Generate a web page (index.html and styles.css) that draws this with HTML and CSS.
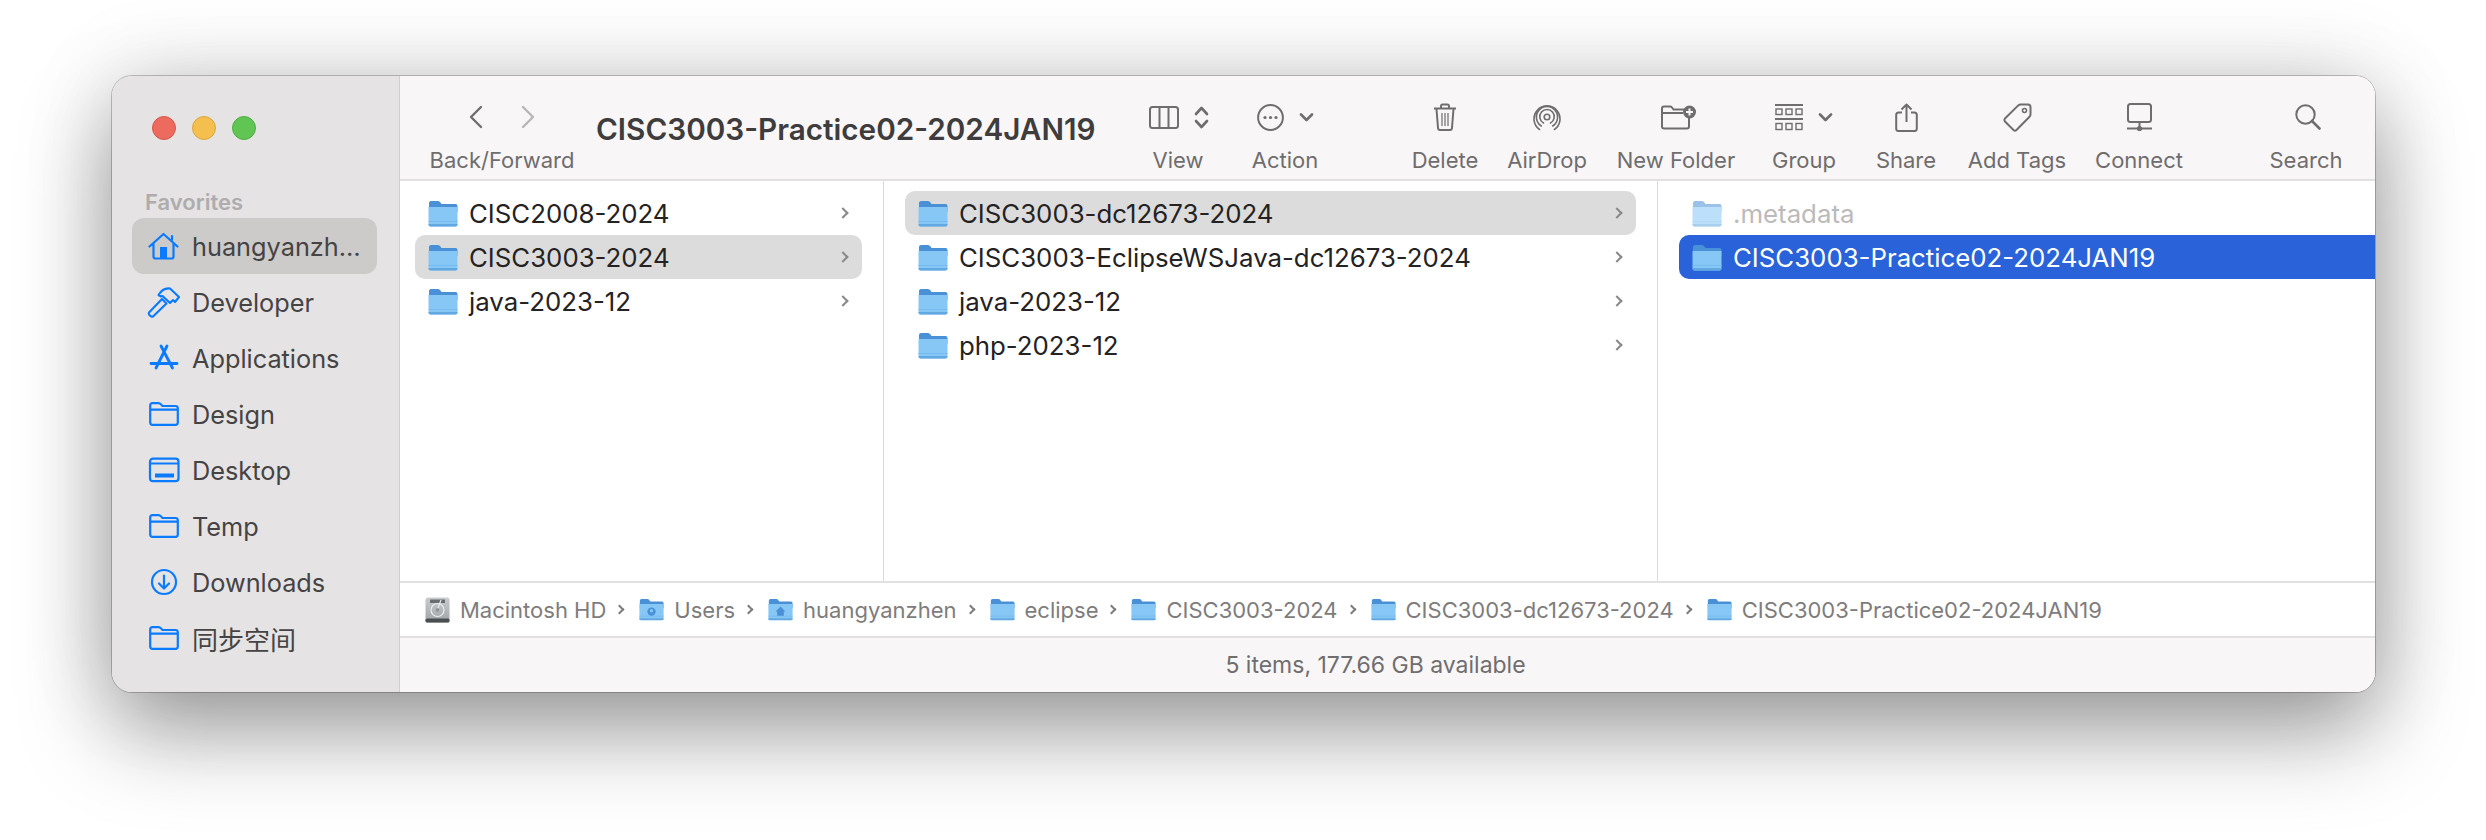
FILE: index.html
```html
<!DOCTYPE html>
<html lang="en">
<head>
    <meta charset="UTF-8">
    <meta name="viewport" content="width=device-width, initial-scale=1.0">
    <title>CISC3003-Practice02-2024JAN19</title>
    <link rel="stylesheet" href="styles.css">
</head>
<body>

    <svg class="defs" aria-hidden="true">
        <symbol id="folder" viewBox="0 0 30 27">
            <path d="M1 5V3Q1 1 3 1H10Q11.5 1 12.5 2.5L13.5 4H27.5Q29.5 4 29.5 6V12H1Z" fill="#4a90d6"/>
            <path d="M.5 7H29.5V24.5Q29.5 26.5 27.5 26.5H2.5Q.5 26.5 .5 24.5Z" fill="#86c7f6"/>
            <path d="M.5 21H29.5V21.8H.5Z" fill="#72b8ee"/>
            <path d="M.5 24H29.5V24.5Q29.5 26.5 27.5 26.5H2.5Q.5 26.5 .5 24.5Z" fill="#63a8e0"/>
        </symbol>
        <symbol id="side-folder" viewBox="0 0 32 28">
            <path d="M2.2 7V5.5Q2.2 3.2 4.5 3.2H10.5Q12 3.2 13 4.4L14.4 6H27.5Q29.8 6 29.8 8.3V22.5Q29.8 24.8 27.5 24.8H4.5Q2.2 24.8 2.2 22.5V7ZM2.2 9.6H29.8" fill="none" stroke="#0a7aff" stroke-width="2.2"/>
        </symbol>
        <symbol id="chev-down" viewBox="0 0 15 9">
            <path d="M2 1.5L7.5 7L13 1.5" fill="none" stroke="#6f6d6d" stroke-width="2.6" stroke-linecap="round" stroke-linejoin="round"/>
        </symbol>
    </svg>

    <div class="window">
        <aside class="sidebar">
            <div class="lights">
                <span class="light red"></span>
                <span class="light yellow"></span>
                <span class="light green"></span>
            </div>
            <div class="side-title">Favorites</div>
            <ul class="side-list">
                <li class="side-item active">
                    <svg class="side-icon" viewBox="0 0 32 28"><path d="M1.5 14.5L15.5 2L29.5 14.5M5.5 11V24.5Q5.5 26.5 7.5 26.5H23.5Q25.5 26.5 25.5 24.5V11M24 4V8" fill="none" stroke="#0a7aff" stroke-width="2.2" stroke-linecap="round" stroke-linejoin="round"/><rect x="12" y="15" width="7" height="11" fill="#0a7aff"/></svg>
                    <span>huangyanzh…</span>
                </li>
                <li class="side-item">
                    <svg class="side-icon" viewBox="0 0 32 28"><path d="M1 24.5L14 11L18.5 15.5L5 28.5Q3.5 29 2.5 28L1 26.5Q.5 25.5 1 24.5ZM10.5 7Q15 -.5 22 .5L31 9L27 14L25 12L22 15L14.5 8L13 8.5Z" fill="none" stroke="#0a7aff" stroke-width="2.1" stroke-linejoin="round"/></svg>
                    <span>Developer</span>
                </li>
                <li class="side-item">
                    <svg class="side-icon" viewBox="0 0 32 28"><path d="M13 2L24.5 24M19 2L8 24M3 19.5H29" fill="none" stroke="#0a7aff" stroke-width="2.8" stroke-linecap="round"/></svg>
                    <span>Applications</span>
                </li>
                <li class="side-item">
                    <svg class="side-icon"><use href="#side-folder"/></svg>
                    <span>Design</span>
                </li>
                <li class="side-item">
                    <svg class="side-icon" viewBox="0 0 32 25"><rect x="2" y="1.2" width="28.5" height="22.5" rx="3" fill="none" stroke="#0a7aff" stroke-width="2.2"/><path d="M2 6H30.5" stroke="#0a7aff" stroke-width="2"/><rect x="7" y="16" width="19" height="4" fill="#0a7aff"/></svg>
                    <span>Desktop</span>
                </li>
                <li class="side-item">
                    <svg class="side-icon"><use href="#side-folder"/></svg>
                    <span>Temp</span>
                </li>
                <li class="side-item">
                    <svg class="side-icon" viewBox="0 0 32 28"><circle cx="16" cy="14" r="12" fill="none" stroke="#0a7aff" stroke-width="2.2"/><path d="M16 7.5V20M11 15.5L16 20.5L21 15.5" fill="none" stroke="#0a7aff" stroke-width="2.2" stroke-linecap="round" stroke-linejoin="round"/></svg>
                    <span>Downloads</span>
                </li>
                <li class="side-item">
                    <svg class="side-icon"><use href="#side-folder"/></svg>
                    <span class="cjk">同步空间</span>
                </li>
            </ul>
        </aside>

        <main class="main">
            <header class="toolbar">
                <div class="tool nav">
                    <div class="tool-icons nav-icons">
                        <svg class="ic" width="14" height="24" viewBox="0 0 14 24"><path d="M12 2L2 12L12 22" fill="none" stroke="#6f6d6d" stroke-width="2.4" stroke-linecap="round" stroke-linejoin="round"/></svg>
                        <svg class="ic" width="14" height="24" viewBox="0 0 14 24"><path d="M2 2L12 12L2 22" fill="none" stroke="#b8b6b6" stroke-width="2.4" stroke-linecap="round" stroke-linejoin="round"/></svg>
                    </div>
                    <div class="tool-label">Back/Forward</div>
                </div>
                <div class="win-title">CISC3003-Practice02-2024JAN19</div>

                <div class="tool t-view">
                    <div class="tool-icons">
                        <svg width="30" height="23" viewBox="0 0 30 23"><rect x="1" y="1" width="28" height="21" rx="2.5" fill="none" stroke="#6f6d6d" stroke-width="2"/><path d="M10.5 1V22M19.5 1V22" stroke="#6f6d6d" stroke-width="2"/></svg>
                        <svg width="15" height="23" viewBox="0 0 15 23"><path d="M2 8L7.5 2L13 8M2 15L7.5 21L13 15" fill="none" stroke="#6f6d6d" stroke-width="2.6" stroke-linecap="round" stroke-linejoin="round"/></svg>
                    </div>
                    <div class="tool-label">View</div>
                </div>
                <div class="tool t-action">
                    <div class="tool-icons">
                        <svg width="27" height="27" viewBox="0 0 27 27"><circle cx="13.5" cy="13.5" r="12.4" fill="none" stroke="#6f6d6d" stroke-width="2"/><circle cx="8" cy="13.5" r="1.6" fill="#6f6d6d"/><circle cx="13.5" cy="13.5" r="1.6" fill="#6f6d6d"/><circle cx="19" cy="13.5" r="1.6" fill="#6f6d6d"/></svg>
                        <svg class="chev" width="15" height="9"><use href="#chev-down"/></svg>
                    </div>
                    <div class="tool-label">Action</div>
                </div>
                <div class="tool t-delete">
                    <div class="tool-icons">
                        <svg width="24" height="28" viewBox="0 0 24 28"><path d="M1 5.5H23M8 5V3.2Q8 1.5 9.7 1.5H14.3Q16 1.5 16 3.2V5M3.5 6L5 25Q5.2 27 7 27H17Q18.8 27 19 25L20.5 6" fill="none" stroke="#6f6d6d" stroke-width="2"/><path d="M9 10V23M12 10V23M15 10V23" stroke="#6f6d6d" stroke-width="1.2"/></svg>
                    </div>
                    <div class="tool-label">Delete</div>
                </div>
                <div class="tool t-airdrop">
                    <div class="tool-icons">
                        <svg width="28" height="27" viewBox="0 0 28 27"><g fill="none" stroke="#6f6d6d" stroke-width="1.6" stroke-linecap="round"><circle cx="14" cy="13" r="2.8"/><path d="M10.5 19A7.2 7.2 0 1 1 17.5 19"/><path d="M8.3 22A10.6 10.6 0 1 1 19.7 22"/><path d="M6.5 25.5A13 13 0 1 1 21.5 25.5"/></g></svg>
                    </div>
                    <div class="tool-label">AirDrop</div>
                </div>
                <div class="tool t-newfolder">
                    <div class="tool-icons">
                        <svg width="36" height="25" viewBox="0 0 36 25"><path d="M1 6V3.5Q1 1.5 3 1.5H9Q10.2 1.5 11 2.5L12.5 4.5H23M1 6V21.5Q1 23.5 3 23.5H26Q28 23.5 28 21.5V13M1 8H22" fill="none" stroke="#6f6d6d" stroke-width="2"/><circle cx="28.5" cy="7" r="6.5" fill="#6f6d6d"/><path d="M28.5 3.5V10.5M25 7H32" stroke="#f8f6f7" stroke-width="2"/></svg>
                    </div>
                    <div class="tool-label">New Folder</div>
                </div>
                <div class="tool t-group">
                    <div class="tool-icons">
                        <svg width="28" height="27" viewBox="0 0 28 27"><path d="M0 1H28M0 15H28" stroke="#6f6d6d" stroke-width="2"/><g fill="none" stroke="#6f6d6d" stroke-width="1.4"><rect x="1" y="5" width="6" height="5.5"/><rect x="11" y="5" width="6" height="5.5"/><rect x="21" y="5" width="6" height="5.5"/><rect x="1" y="19.5" width="6" height="6"/><rect x="11" y="19.5" width="6" height="6"/><rect x="21" y="19.5" width="6" height="6"/></g></svg>
                        <svg class="chev" width="15" height="9"><use href="#chev-down"/></svg>
                    </div>
                    <div class="tool-label">Group</div>
                </div>
                <div class="tool t-share">
                    <div class="tool-icons">
                        <svg width="23" height="29" viewBox="0 0 23 29"><path d="M7 9.5H3.5Q1.2 9.5 1.2 12V25.5Q1.2 28 3.5 28H19.5Q21.8 28 21.8 25.5V12Q21.8 9.5 19.5 9.5H16M11.5 19V2M6.5 6.5L11.5 1.5L16.5 6.5" fill="none" stroke="#6f6d6d" stroke-width="2" stroke-linejoin="round"/></svg>
                    </div>
                    <div class="tool-label">Share</div>
                </div>
                <div class="tool t-tags">
                    <div class="tool-icons">
                        <svg width="29" height="29" viewBox="0 0 29 29"><path d="M17.5 1.5H25Q27.5 1.5 27.5 4V11.5Q27.5 12.8 26.5 13.8L13.5 27Q12 28.2 10.5 27L2 18.5Q.8 17 2 15.5L15.3 2.4Q16.3 1.5 17.5 1.5Z" fill="none" stroke="#6f6d6d" stroke-width="2"/><circle cx="21.5" cy="7.5" r="2" fill="none" stroke="#6f6d6d" stroke-width="1.6"/></svg>
                    </div>
                    <div class="tool-label">Add Tags</div>
                </div>
                <div class="tool t-connect">
                    <div class="tool-icons">
                        <svg width="25" height="29" viewBox="0 0 25 29"><rect x="1" y="1" width="23" height="18" rx="2.5" fill="none" stroke="#6f6d6d" stroke-width="2"/><path d="M12.5 19V25M0 25.5H25" stroke="#6f6d6d" stroke-width="2"/><circle cx="12.5" cy="25.5" r="2.6" fill="#6f6d6d"/></svg>
                    </div>
                    <div class="tool-label">Connect</div>
                </div>
                <div class="tool t-search">
                    <div class="tool-icons">
                        <svg width="26" height="26" viewBox="0 0 26 26"><circle cx="10.5" cy="10.5" r="9.2" fill="none" stroke="#6f6d6d" stroke-width="2"/><path d="M17 17L24.5 24.5" stroke="#6f6d6d" stroke-width="2.6" stroke-linecap="round"/></svg>
                    </div>
                    <div class="tool-label">Search</div>
                </div>
            </header>

            <section class="columns">
                <div class="col col-one">
                    <div class="row">
                        <svg class="folder"><use href="#folder"/></svg>
                        <span class="row-name">CISC2008-2024</span>
                        <span class="row-chev"></span>
                    </div>
                    <div class="row current">
                        <svg class="folder"><use href="#folder"/></svg>
                        <span class="row-name">CISC3003-2024</span>
                        <span class="row-chev"></span>
                    </div>
                    <div class="row">
                        <svg class="folder"><use href="#folder"/></svg>
                        <span class="row-name">java-2023-12</span>
                        <span class="row-chev"></span>
                    </div>
                </div>
                <div class="col col-two">
                    <div class="row current">
                        <svg class="folder"><use href="#folder"/></svg>
                        <span class="row-name">CISC3003-dc12673-2024</span>
                        <span class="row-chev"></span>
                    </div>
                    <div class="row">
                        <svg class="folder"><use href="#folder"/></svg>
                        <span class="row-name">CISC3003-EclipseWSJava-dc12673-2024</span>
                        <span class="row-chev"></span>
                    </div>
                    <div class="row">
                        <svg class="folder"><use href="#folder"/></svg>
                        <span class="row-name">java-2023-12</span>
                        <span class="row-chev"></span>
                    </div>
                    <div class="row">
                        <svg class="folder"><use href="#folder"/></svg>
                        <span class="row-name">php-2023-12</span>
                        <span class="row-chev"></span>
                    </div>
                </div>
                <div class="col col-three">
                    <div class="row hidden-file">
                        <svg class="folder"><use href="#folder"/></svg>
                        <span class="row-name">.metadata</span>
                    </div>
                    <div class="row selected">
                        <svg class="folder"><use href="#folder"/></svg>
                        <span class="row-name">CISC3003-Practice02-2024JAN19</span>
                    </div>
                </div>
            </section>

            <nav class="pathbar">
                <svg class="crumb-icon" width="25" height="26" viewBox="0 0 25 26">
                    <defs><linearGradient id="hd" x1="0" y1="0" x2="0" y2="1"><stop offset="0" stop-color="#c9cccd"/><stop offset="1" stop-color="#9fa4a6"/></linearGradient></defs>
                    <rect x=".5" y=".5" width="24" height="25" rx="2.5" fill="url(#hd)"/>
                    <rect x="5" y="2.5" width="15" height="3.5" fill="#6a6d6f"/>
                    <circle cx="12.5" cy="13" r="6.5" fill="none" stroke="#eceeee" stroke-width="1.2"/>
                    <path d="M16 3L13 11" stroke="#eceeee" stroke-width="1.2"/>
                    <circle cx="12.5" cy="13" r="1.8" fill="#8d9294"/>
                    <rect x=".5" y="21.5" width="24" height="4" rx="1.5" fill="#4b4e50"/>
                </svg>
                <span class="crumb">Macintosh HD</span><span class="crumb-sep"></span>
                <svg class="crumb-icon" width="25" height="23" viewBox="0 0 30 27"><use href="#folder"/><circle cx="15" cy="16" r="5" fill="#4a90d6"/><circle cx="15" cy="15" r="2" fill="#86c7f6"/></svg>
                <span class="crumb">Users</span><span class="crumb-sep"></span>
                <svg class="crumb-icon" width="25" height="23" viewBox="0 0 30 27"><use href="#folder"/><path d="M15 10L21 16H19V21H11V16H9Z" fill="#4a90d6"/></svg>
                <span class="crumb">huangyanzhen</span><span class="crumb-sep"></span>
                <svg class="crumb-icon" width="25" height="23" viewBox="0 0 30 27"><use href="#folder"/></svg>
                <span class="crumb">eclipse</span><span class="crumb-sep"></span>
                <svg class="crumb-icon" width="25" height="23" viewBox="0 0 30 27"><use href="#folder"/></svg>
                <span class="crumb">CISC3003-2024</span><span class="crumb-sep"></span>
                <svg class="crumb-icon" width="25" height="23" viewBox="0 0 30 27"><use href="#folder"/></svg>
                <span class="crumb">CISC3003-dc12673-2024</span><span class="crumb-sep"></span>
                <svg class="crumb-icon" width="25" height="23" viewBox="0 0 30 27"><use href="#folder"/></svg>
                <span class="crumb">CISC3003-Practice02-2024JAN19</span>
            </nav>

            <footer class="statusbar">5 items, 177.66 GB available</footer>
        </main>
    </div>

</body>
</html>
```

FILE: styles.css
```css
* {
    box-sizing: border-box;
}
html, body {
    margin: 0;
    height: 100%;
    overflow: hidden;
}
body {
    background-color: #fff;
    padding: 76px 0 0 112px;
    font-family: Inter, "Noto Sans CJK SC", sans-serif;
}
.defs {
    position: absolute;
    width: 0;
    height: 0;
}
.window {
    display: flex;
    width: 2263px;
    height: 616px;
    border-radius: 20px;
    box-shadow: 0 0 0 1px rgba(0, 0, 0, 0.22), 0 40px 90px rgba(0, 0, 0, 0.36), 0 0 90px rgba(0, 0, 0, 0.14);
    overflow: hidden;
}

/* sidebar */
.sidebar {
    width: 288px;
    flex-shrink: 0;
    padding: 40px 22px 0 20px;
    background-color: #e5e3e4;
    border-right: 1px solid #cfcdce;
}
.lights {
    display: flex;
    gap: 16px;
    padding-left: 20px;
}
.light {
    width: 24px;
    height: 24px;
    border-radius: 50%;
}
.red {
    background-color: #ed6a5e;
    border: 1px solid #d5574c;
}
.yellow {
    background-color: #f5bf4f;
    border: 1px solid #dca63c;
}
.green {
    background-color: #61c554;
    border: 1px solid #4fae44;
}
.side-title {
    margin-top: 48px;
    padding-left: 13px;
    font-size: 22px;
    line-height: 28px;
    font-weight: 600;
    color: #aeacad;
}
.side-list {
    list-style: none;
    margin: 2px 0 0;
    padding: 0;
}
.side-item {
    display: flex;
    align-items: center;
    gap: 12px;
    height: 56px;
    padding-left: 16px;
    border-radius: 12px;
    font-size: 25.3px;
    color: #454343;
}
.side-item.active {
    background-color: #cccbca;
}
.side-icon {
    width: 32px;
    height: 28px;
    flex-shrink: 0;
    overflow: visible;
}
.cjk {
    font-size: 26px;
}

/* toolbar */
.main {
    flex: 1;
    display: flex;
    flex-direction: column;
    min-width: 0;
    background-color: #fff;
}
.toolbar {
    display: flex;
    height: 105px;
    flex-shrink: 0;
    padding-left: 30px;
    background-color: #f8f6f7;
    border-bottom: 2px solid #e2e0e1;
}
.tool {
    display: flex;
    flex-direction: column;
    align-items: center;
    flex-shrink: 0;
}
.tool-icons {
    display: flex;
    align-items: center;
    justify-content: center;
    gap: 15px;
    height: 30px;
    margin-top: 26px;
}
.tool-label {
    margin-top: 15px;
    font-size: 22px;
    line-height: 26px;
    color: #6f6d6d;
    white-space: nowrap;
}
.nav {
    width: 144px;
}
.nav-icons {
    gap: 38px;
}
.win-title {
    width: 527px;
    flex-shrink: 0;
    margin: 35px 0 0 22px;
    font-size: 29.7px;
    line-height: 36px;
    font-weight: 600;
    color: #3e3c3c;
    white-space: nowrap;
}
.t-view { width: 110px; }
.t-action { width: 104px; }
.t-delete { width: 96px; margin-left: 60px; }
.t-airdrop { width: 108px; }
.t-newfolder { width: 150px; }
.t-group { width: 106px; }
.t-share { width: 98px; }
.t-tags { width: 124px; }
.t-connect { width: 120px; }
.t-search { width: 100px; margin-left: 57px; }
.t-view .tool-icons { padding-left: 2px; }
.t-newfolder .tool-icons { padding-left: 5px; }
.t-search .tool-icons { padding-left: 3px; }

/* columns */
.columns {
    flex: 1;
    display: flex;
    min-height: 0;
}
.col {
    flex-shrink: 0;
    padding: 10px 21px 0;
}
.col-one {
    width: 484px;
    padding-left: 15px;
    border-right: 1px solid #dcdada;
}
.col-two {
    width: 774px;
    border-right: 1px solid #dcdada;
}
.col-three {
    flex: 1;
    padding-right: 0;
}
.row {
    display: flex;
    align-items: center;
    height: 44px;
    padding: 0 13px;
    border-radius: 10px;
    font-size: 25.8px;
    color: #242222;
}
.row.current {
    background-color: #dcdcdc;
}
.folder {
    width: 30px;
    height: 27px;
    flex-shrink: 0;
    margin-right: 11px;
}
.row-name {
    flex: 1;
    white-space: nowrap;
}
.row-chev {
    width: 8px;
    height: 8px;
    margin-right: 2px;
    border-top: 2px solid #8a8888;
    border-right: 2px solid #8a8888;
    transform: rotate(45deg);
}
.hidden-file .folder {
    opacity: 0.55;
}
.hidden-file .row-name {
    color: #bcbaba;
}
.row.selected {
    background-color: #2962d9;
    color: #fff;
    border-radius: 10px 0 0 10px;
}

/* path and status bars */
.pathbar {
    display: flex;
    align-items: center;
    height: 57px;
    flex-shrink: 0;
    padding-left: 25px;
    border-top: 2px solid #e2e0e1;
    border-bottom: 2px solid #e2e0e1;
    font-size: 22px;
    color: #7e7c7c;
}
.crumb-icon {
    flex-shrink: 0;
    margin-right: 10px;
}
.crumb {
    white-space: nowrap;
}
.crumb-sep {
    width: 7px;
    height: 7px;
    margin: 0 16px 0 10px;
    border-top: 2px solid #7e7c7c;
    border-right: 2px solid #7e7c7c;
    transform: rotate(45deg);
}
.statusbar {
    display: flex;
    align-items: center;
    justify-content: center;
    height: 54px;
    flex-shrink: 0;
    padding-right: 24px;
    background-color: #f8f6f7;
    font-size: 23px;
    color: #6f6d6d;
}
```
